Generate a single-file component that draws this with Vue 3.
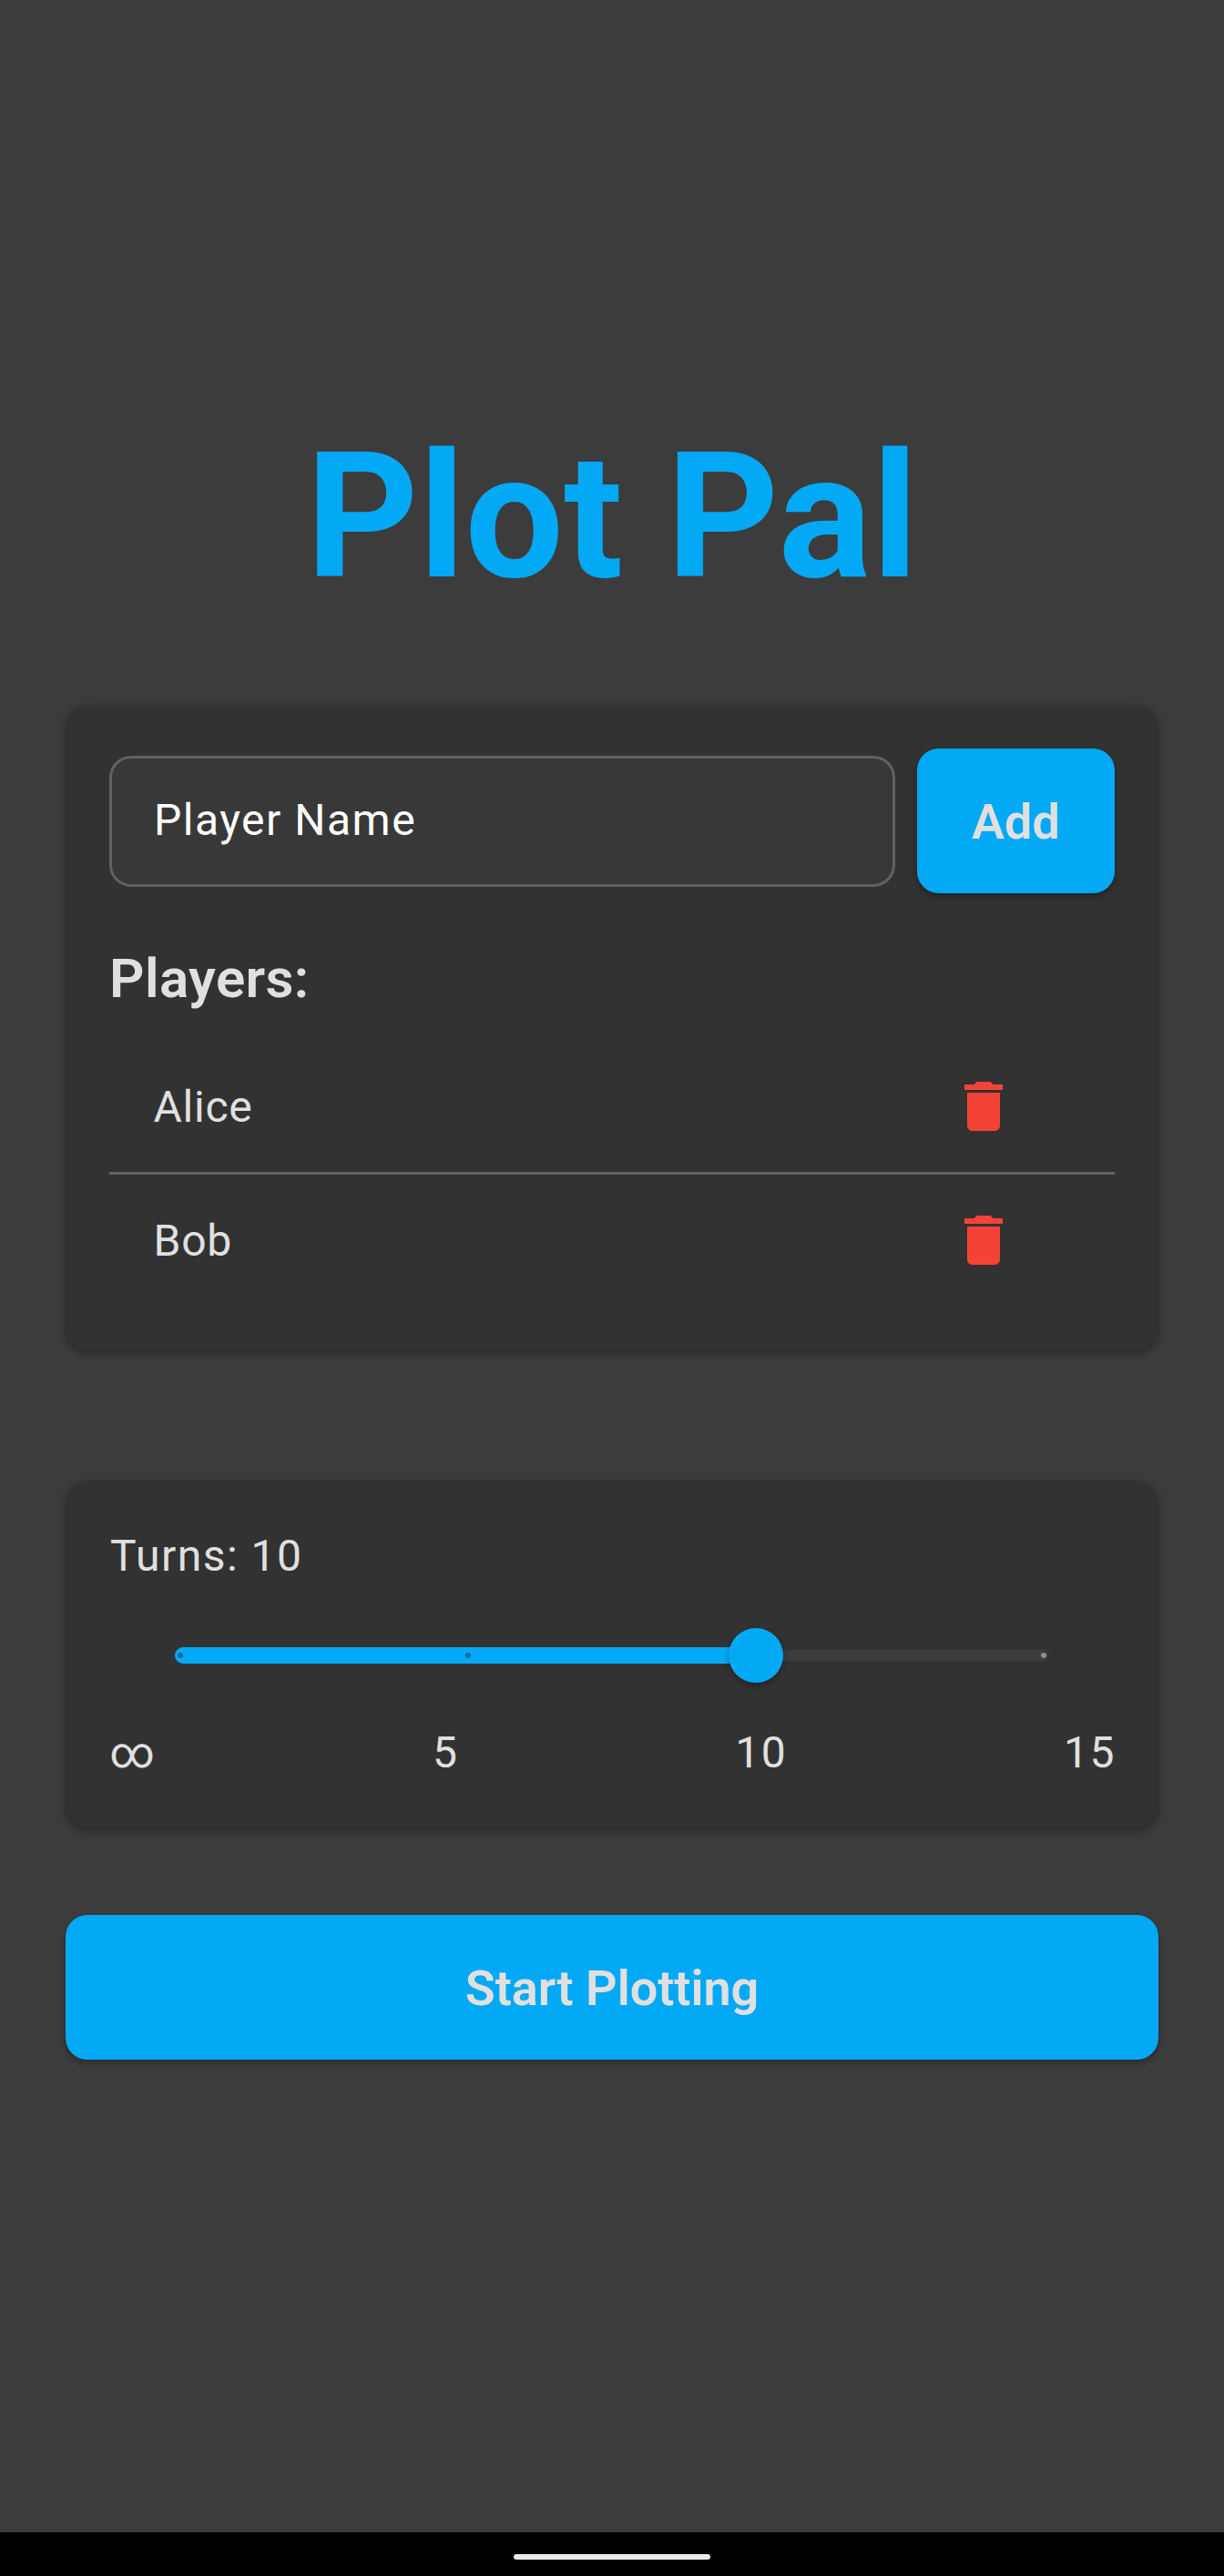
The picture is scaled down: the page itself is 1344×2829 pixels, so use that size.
<script setup>
import { ref, computed } from 'vue'

const players = ref(['Alice', 'Bob'])
const labels = ['∞', '5', '10', '15']
const step = ref(2)
const percent = computed(() => (step.value / (labels.length - 1)) * 100)

function removePlayer(index) {
  players.value.splice(index, 1)
}
</script>

<template>
  <div class="screen">
    <main class="content">
      <h1 class="title">Plot Pal</h1>

      <section class="card players-card">
        <div class="entry">
          <div class="field">Player Name</div>
          <button class="btn add">Add</button>
        </div>
        <h2 class="heading">Players:</h2>
        <ul class="list">
          <li v-for="(name, i) in players" :key="name" class="row">
            <span class="name">{{ name }}</span>
            <button class="remove" aria-label="Remove" @click="removePlayer(i)">
              <svg viewBox="0 0 24 24" width="72" height="72">
                <path d="M6 19c0 1.1.9 2 2 2h8c1.1 0 2-.9 2-2V7H6v12zM19 4h-3.5l-1-1h-5l-1 1H5v2h14V4z" />
              </svg>
            </button>
          </li>
        </ul>
      </section>

      <section class="card turns-card">
        <div class="turns">Turns: {{ labels[step] }}</div>
        <div class="slider">
          <div class="track"></div>
          <div class="rail">
            <div class="active" :style="{ width: `calc(${percent}% + 6px)` }"></div>
            <i
              v-for="(label, i) in labels"
              :key="label"
              class="tick"
              :class="{ off: i > step }"
              :style="{ left: (i / (labels.length - 1)) * 100 + '%' }"
            ></i>
            <div class="thumb" :style="{ left: percent + '%' }"></div>
          </div>
        </div>
        <div class="labels">
          <span v-for="label in labels" :key="label">{{ label }}</span>
        </div>
      </section>

      <button class="btn start">Start Plotting</button>
    </main>

    <footer class="nav"><div class="pill"></div></footer>
  </div>
</template>

<style>
body {
  margin: 0;
  background: #3c3c3c;
}
</style>

<style scoped>
.screen {
  box-sizing: border-box;
  width: 1344px;
  height: 2829px;
  display: flex;
  flex-direction: column;
  background: #3c3c3c;
  color: #e0e0e0;
  font-family: Roboto, sans-serif;
  font-size: 48px;
  line-height: 72px;
  letter-spacing: 1.5px;
  overflow: hidden;
}
.content {
  flex: 1;
  display: flex;
  flex-direction: column;
  padding: 450px 72px 0;
}
.title {
  box-sizing: border-box;
  margin: 0 0 96px;
  height: 228px;
  padding-top: 4px;
  line-height: 228px;
  font-size: 192px;
  font-weight: 700;
  letter-spacing: 0;
  text-align: center;
  color: #03a9f4;
}
.card {
  box-sizing: border-box;
  padding: 48px;
  border-radius: 24px;
  background: #323232;
  box-shadow: 0 3px 12px rgba(0, 0, 0, 0.22), 0 6px 6px rgba(0, 0, 0, 0.1);
}
.players-card {
  height: 708px;
  margin-bottom: 144px;
}
.entry {
  display: flex;
  align-items: center;
  gap: 24px;
  height: 159px;
}
.field {
  box-sizing: border-box;
  flex: 1;
  height: 144px;
  margin-top: 1px;
  padding: 32px 45px 32px 46px;
  border: 3px solid #616161;
  border-radius: 24px;
  background: #383838;
  color: #fff;
}
.btn {
  display: block;
  height: 159px;
  padding: 1px 0 0;
  border: 0;
  border-radius: 24px;
  background: #03a9f4;
  color: #e0e0e0;
  font-family: inherit;
  font-size: 54px;
  font-weight: 580;
  letter-spacing: -0.03px;
  box-shadow: 0 3px 6px rgba(0, 0, 0, 0.22), 0 6px 6px rgba(0, 0, 0, 0.08);
}
.add {
  width: 217px;
}
.heading {
  margin: 49px 0 23px;
  font-size: 60px;
  line-height: 90px;
  font-weight: 600;
  letter-spacing: 0.4px;
}
.list {
  margin: 0;
  padding: 0;
  list-style: none;
}
.row {
  display: flex;
  align-items: center;
  justify-content: space-between;
  height: 144px;
  padding: 0 72px 0 48px;
}
.name {
  padding: 1px 0 0 0.5px;
  letter-spacing: 0.75px;
}
.row + .row {
  border-top: 3px solid #616161;
}
.remove {
  display: flex;
  align-items: center;
  justify-content: center;
  width: 144px;
  height: 144px;
  padding: 0;
  border: 0;
  background: none;
}
.remove svg {
  fill: #f44336;
}
.turns-card {
  height: 381px;
  margin-bottom: 96px;
}
.turns {
  height: 72px;
  padding-left: 1px;
  line-height: 70px;
}
.slider {
  position: relative;
  display: flex;
  align-items: center;
  height: 144px;
  padding: 0 78px;
}
.track {
  position: absolute;
  left: 72px;
  right: 72px;
  top: 66px;
  height: 12px;
  border-radius: 6px;
  background: #3c3c3c;
}
.rail {
  position: relative;
  flex: 1;
  height: 18px;
}
.active {
  height: 18px;
  margin-left: -6px;
  border-radius: 9px;
  background: #03a9f4;
}
.tick {
  position: absolute;
  top: 6px;
  width: 6px;
  height: 6px;
  margin-left: -3px;
  border-radius: 50%;
  background: #066694;
}
.tick.off {
  background: #8e8e8e;
}
.thumb {
  position: absolute;
  top: -21px;
  width: 60px;
  height: 60px;
  margin-left: -30px;
  border-radius: 50%;
  background: #03a9f4;
  box-shadow: 0 3px 6px rgba(0, 0, 0, 0.22), 0 4px 6px rgba(0, 0, 0, 0.08);
}
.labels {
  display: flex;
  justify-content: space-between;
  height: 69px;
  margin: 0 -1px 0 0.5px;
  line-height: 69px;
}
.start {
  width: 1200px;
}
.nav {
  display: flex;
  align-items: center;
  justify-content: center;
  height: 48px;
  padding-top: 6px;
  box-sizing: border-box;
  background: #000;
}
.pill {
  width: 216px;
  height: 6px;
  border-radius: 3px;
  background: #ebebeb;
}
</style>
